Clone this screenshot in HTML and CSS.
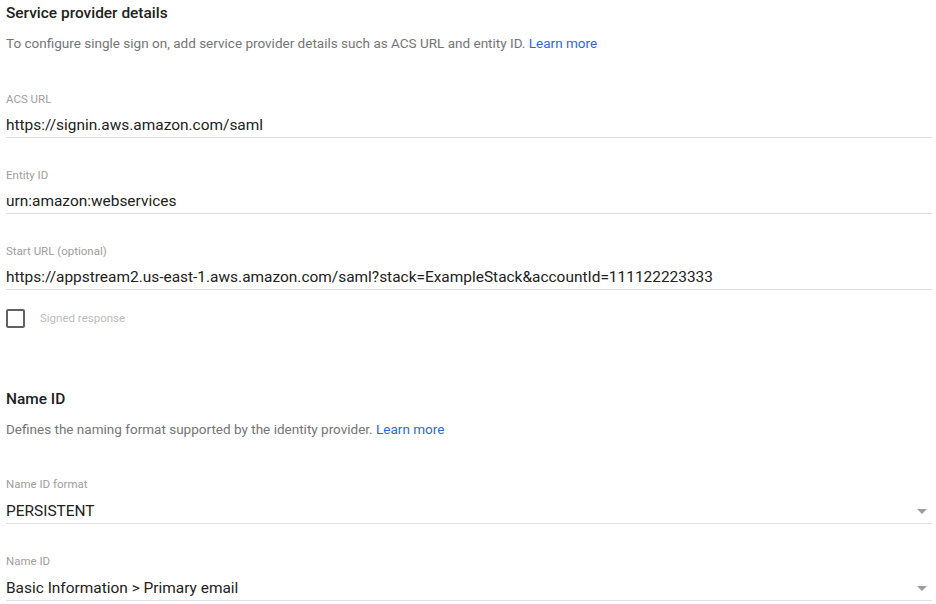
FILE: index.html
```html
<!DOCTYPE html>
<html lang="en">
<head>
<meta charset="utf-8">
<title>Service provider details</title>
<link rel="stylesheet" href="styles.css">
</head>
<body>
<div class="page">
  <section class="section">
    <h2 class="heading">Service provider details</h2>
    <p class="desc">To configure single sign on, add service provider details such as ACS URL and entity ID. <a class="link" href="#">Learn more</a></p>
    <div class="field first">
      <div class="label">ACS URL</div>
      <div class="value">https://signin.aws.amazon.com/saml</div>
    </div>
    <div class="field">
      <div class="label">Entity ID</div>
      <div class="value">urn:amazon:webservices</div>
    </div>
    <div class="field">
      <div class="label">Start URL (optional)</div>
      <div class="value">https://appstream2.us-east-1.aws.amazon.com/saml?stack=ExampleStack&amp;accountId=111122223333</div>
    </div>
    <div class="check-row">
      <span class="checkbox"></span>
      <span class="check-label">Signed response</span>
    </div>
  </section>
  <section class="section second">
    <h2 class="heading">Name ID</h2>
    <p class="desc">Defines the naming format supported by the identity provider. <a class="link" href="#">Learn more</a></p>
    <div class="field first2">
      <div class="label">Name ID format</div>
      <div class="value select">PERSISTENT<span class="arrow"></span></div>
    </div>
    <div class="field">
      <div class="label">Name ID</div>
      <div class="value select">Basic Information &gt; Primary email<span class="arrow"></span></div>
    </div>
  </section>
</div>
</body>
</html>
```
FILE: styles.css
```css
html, body {
  margin: 0;
  padding: 0;
  background: #ffffff;
}
body {
  font-family: Roboto, "Liberation Sans", Arial, sans-serif;
  color: #212121;
}
.page {
  padding: 1px 4px 0 6px;
  width: 926px;
}
.heading {
  margin: 0;
  font-size: 15.45px;
  font-weight: 500;
  line-height: 24px;
  color: #212121;
}
.desc {
  margin: 6px 0 0;
  font-size: 13.52px;
  line-height: 24px;
  color: #757575;
}
.link {
  color: #3367d6;
  text-decoration: none;
}
.field {
  margin-top: 29px;
  border-bottom: 1px solid #e0e0e0;
}
.field.first {
  margin-top: 36px;
}
.field.first2 {
  margin-top: 35px;
}
.label {
  font-size: 11.5px;
  line-height: 16px;
  color: #9e9e9e;
}
.value {
  margin-top: 6px;
  font-size: 15.45px;
  line-height: 24px;
  color: #212121;
}
.select {
  position: relative;
  margin-top: 7px;
}
.arrow {
  position: absolute;
  right: 5px;
  top: 10px;
  width: 0;
  height: 0;
  border-left: 5px solid transparent;
  border-right: 5px solid transparent;
  border-top: 5px solid #9e9e9e;
}
.check-row {
  margin-top: 18px;
  display: flex;
  align-items: center;
  height: 20px;
}
.checkbox {
  box-sizing: border-box;
  width: 19px;
  height: 19px;
  border: 2px solid #616161;
  border-radius: 2px;
}
.check-label {
  margin-left: 15px;
  font-size: 11.5px;
  color: #bdbdbd;
}
.section.second {
  margin-top: 59px;
}
```
